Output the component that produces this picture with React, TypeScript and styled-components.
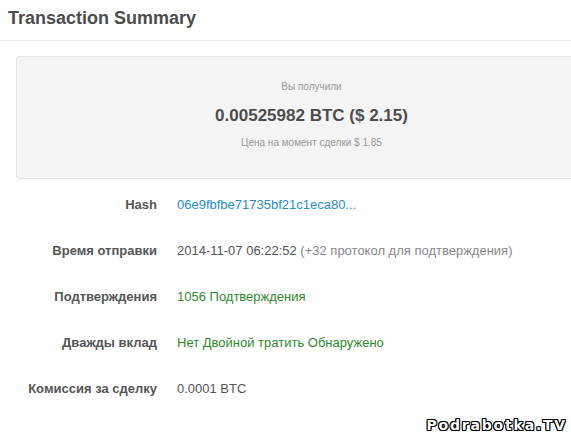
import { createGlobalStyle, styled } from 'styled-components';

const GlobalStyle = createGlobalStyle`
  html, body {
    margin: 0;
    padding: 0;
    background: #fff;
  }
  body {
    font-family: 'Liberation Sans', Arial, sans-serif;
  }
`;

const ROWS = [
  { label: 'Hash', value: '06e9fbfbe71735bf21c1eca80...', tone: 'link' },
  { label: 'Время отправки', value: '2014-11-07 06:22:52', note: ' (+32 протокол для подтверждения)', tone: 'plain' },
  { label: 'Подтверждения', value: '1056 Подтверждения', tone: 'ok' },
  { label: 'Дважды вклад', value: 'Нет Двойной тратить Обнаружено', tone: 'ok' },
  { label: 'Комиссия за сделку', value: '0.0001 BTC', tone: 'plain' },
];

const App = () => {
  return (
    <Page>
      <GlobalStyle />
      <Header>
        <Title>Transaction Summary</Title>
      </Header>
      <Summary>
        <Caption>Вы получили</Caption>
        <Amount>0.00525982 BTC ($ 2.15)</Amount>
        <Caption>Цена на момент сделки $ 1.85</Caption>
      </Summary>
      <Details>
        {ROWS.map((row) => (
          <Row key={row.label}>
            <Label>{row.label}</Label>
            <Value tone={row.tone}>
              {row.value}
              {row.note && <Note>{row.note}</Note>}
            </Value>
          </Row>
        ))}
      </Details>
      <Watermark>Podrabotka.TV</Watermark>
    </Page>
  );
};

export default App;

const Page = styled.div`
  position: relative;
  width: 571px;
  height: 442px;
  overflow: hidden;
  background: #fff;
`;

const Header = styled.div`
  height: 40px;
  padding: 0 8px;
  display: flex;
  align-items: center;
  border-bottom: 1px solid #ededed;
`;

const Title = styled.h1`
  margin: 0;
  margin-top: -3px;
  font-size: 18px;
  font-weight: bold;
  color: #4d4d4d;
`;

const Summary = styled.div`
  box-sizing: border-box;
  margin: 15px 0 0 16px;
  width: 591px;
  height: 123px;
  background: #f4f4f4;
  border: 1px solid #e4e4e4;
  border-radius: 3px;
  display: flex;
  flex-direction: column;
  align-items: center;
  padding-top: 22px;
`;

const Caption = styled.div`
  font-size: 10px;
  color: #999;
  line-height: 16px;
`;

const Amount = styled.div`
  font-size: 17px;
  font-weight: bold;
  color: #4d4d4d;
  line-height: 20px;
  margin: 11px 0 9px;
`;

const Details = styled.div`
  display: flex;
  flex-direction: column;
  padding-top: 2px;
`;

const Row = styled.div`
  display: grid;
  grid-template-columns: 157px 1fr;
  column-gap: 20px;
  align-items: center;
  height: 46px;
`;

const Label = styled.div`
  text-align: right;
  font-size: 13px;
  font-weight: bold;
  color: #555;
`;

const Value = styled.div<{ tone: string }>`
  font-size: 13px;
  white-space: nowrap;
  color: ${({ tone }) =>
    tone === 'link' ? '#2a8cc4' : tone === 'ok' ? '#2d8a2d' : '#555'};
`;

const Note = styled.span`
  color: #888;
`;

const Watermark = styled.div`
  position: absolute;
  right: 4px;
  bottom: 9px;
  font-family: 'DejaVu Sans', sans-serif;
  font-size: 14px;
  line-height: 16px;
  font-weight: bold;
  color: #fff;
  letter-spacing: 1.8px;
  text-shadow:
    -1px -1px 0 #000,
    1px -1px 0 #000,
    -1px 1px 0 #000,
    1px 1px 0 #000,
    0 1px 0 #000,
    0 -1px 0 #000,
    1px 0 0 #000,
    -1px 0 0 #000;
`;
